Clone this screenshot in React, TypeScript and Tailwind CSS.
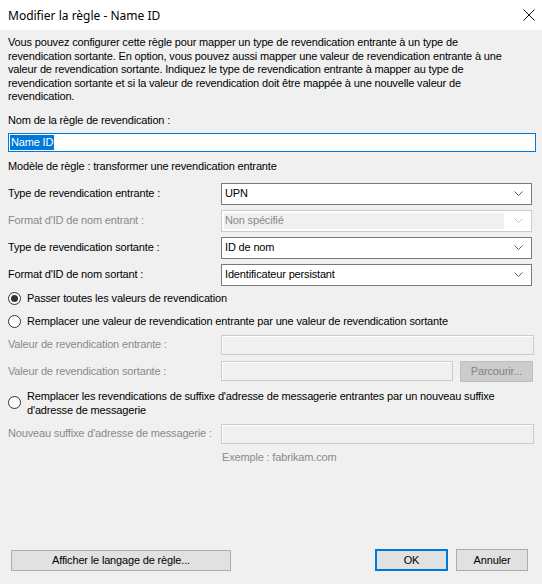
import React from 'react';

const font = { fontFamily: '"Liberation Sans", Arial, sans-serif' };

const Chevron: React.FC<{ disabled?: boolean }> = ({ disabled }) => (
  <svg width="9" height="5" viewBox="0 0 9 5" className="shrink-0">
    <path d="M0.5 0.5 L4.5 4.5 L8.5 0.5" fill="none" stroke={disabled ? '#c4c4c4' : '#606060'} strokeWidth="1" />
  </svg>
);

const Combo: React.FC<{ value: string; disabled?: boolean }> = ({ value, disabled }) =>
  disabled ? (
    <div className="w-[311px] h-[22px] border border-[#cccccc] bg-white flex items-center p-[2px] pr-[8px]">
      <div className="flex-1 h-full bg-[#f0f0f0] text-[#8a8a8a] flex items-center pl-[1px]">{value}</div>
      <div className="w-[19px] flex justify-end">
        <Chevron disabled />
      </div>
    </div>
  ) : (
    <div className="w-[311px] h-[22px] border border-[#7a7a7a] bg-white flex items-center pl-[3px] pr-[8px] text-black">
      <span className="flex-1">{value}</span>
      <Chevron />
    </div>
  );

const Row: React.FC<{ label: string; disabled?: boolean; children: React.ReactNode }> = ({ label, disabled, children }) => (
  <div className="flex items-center">
    <span className={`w-[213px] ${disabled ? 'text-[#8a8a8a]' : 'text-black'}`}>{label}</span>
    {children}
  </div>
);

const DisabledBox: React.FC<{ w: string }> = ({ w }) => (
  <div className={`${w} h-[20px] border border-[#cccccc] bg-[#f0f0f0] shadow-[inset_1px_1px_0_#ffffff]`} />
);

const Radio: React.FC<{ checked?: boolean }> = ({ checked }) => (
  <span className="w-[13px] h-[13px] rounded-full border border-[#333333] bg-white flex items-center justify-center shrink-0">
    {checked && <span className="w-[7px] h-[7px] rounded-full bg-[#333333]" />}
  </span>
);

const App: React.FC = () => {
  return (
    <div
      className="w-[542px] h-[584px] bg-[#f0f0f0] flex flex-col text-[11px] leading-[13px] tracking-[-0.16px] text-black"
      style={font}
    >
      {/* Title bar */}
      <div className="h-[30px] bg-white flex items-center justify-between pl-[8px] pr-[7px] shrink-0 tracking-normal">
        <span className="text-[12px] text-black" style={{ fontFamily: '"Noto Sans", "Open Sans", sans-serif' }}>
          Modifier la règle - Name ID
        </span>
        <svg width="12" height="12" viewBox="0 0 12 12">
          <path d="M0.5 0.5 L11.5 11.5 M11.5 0.5 L0.5 11.5" stroke="#111111" strokeWidth="1" />
        </svg>
      </div>

      <div className="flex-1 flex flex-col px-[8px]">
        <p className="mt-[6px] leading-[13.5px] whitespace-nowrap">
          Vous pouvez configurer cette règle pour mapper un type de revendication entrante à un type de
          <br />
          revendication sortante. En option, vous pouvez aussi mapper une valeur de revendication entrante à une
          <br />
          valeur de revendication sortante. Indiquez le type de revendication entrante à mapper au type de
          <br />
          revendication sortante et si la valeur de revendication doit être mappée à une nouvelle valeur de
          <br />
          revendication.
        </p>

        <div className="mt-[10px]">Nom de la règle de revendication :</div>
        <div className="mt-[6px] w-[528px] h-[19px] border border-[#0078d7] bg-white flex items-center pl-[1px]">
          <span className="bg-[#0078d7] text-white px-[1px] leading-[15px]">Name ID</span>
        </div>
        <div className="mt-[8px]">Modèle de règle : transformer une revendication entrante</div>

        <div className="mt-[10px] flex flex-col gap-[5px]">
          <Row label="Type de revendication entrante :">
            <Combo value="UPN" />
          </Row>
          <Row label="Format d'ID de nom entrant :" disabled>
            <Combo value="Non spécifié" disabled />
          </Row>
          <Row label="Type de revendication sortante :">
            <Combo value="ID de nom" />
          </Row>
          <Row label="Format d'ID de nom sortant :">
            <Combo value="Identificateur persistant" />
          </Row>
        </div>

        <div className="mt-[4px] h-[17px] flex items-center gap-[6px]">
          <Radio checked />
          <span>Passer toutes les valeurs de revendication</span>
        </div>
        <div className="mt-[6px] h-[17px] flex items-center gap-[6px]">
          <Radio />
          <span>Remplacer une valeur de revendication entrante par une valeur de revendication sortante</span>
        </div>

        <div className="mt-[5px] flex flex-col gap-[6px] text-[#8a8a8a]">
          <div className="flex items-center">
            <span className="w-[213px]">Valeur de revendication entrante :</span>
            <DisabledBox w="w-[313px]" />
          </div>
          <div className="flex items-center">
            <span className="w-[213px]">Valeur de revendication sortante :</span>
            <DisabledBox w="w-[232px]" />
            <div className="ml-[7px] w-[73px] h-[21px] bg-[#cccccc] border border-[#bfbfbf] flex items-center justify-center text-[#838383]">
              Parcourir...
            </div>
          </div>
        </div>

        <div className="mt-[7px] flex items-center gap-[6px]">
          <Radio />
          <span className="leading-[14px]">
            Remplacer les revendications de suffixe d'adresse de messagerie entrantes par un nouveau suffixe
            <br />
            d'adresse de messagerie
          </span>
        </div>

        <div className="mt-[7px] flex items-center text-[#8a8a8a]">
          <span className="w-[213px]">Nouveau suffixe d'adresse de messagerie :</span>
          <DisabledBox w="w-[313px]" />
        </div>
        <div className="mt-[7px] pl-[214px] text-[#8a8a8a]">Exemple : fabrikam.com</div>

        <div className="mt-auto mb-[13px] flex items-center">
          <button className="ml-[3px] w-[220px] h-[21px] bg-[#e1e1e1] border border-[#adadad] text-black">
            Afficher le langage de règle...
          </button>
          <button className="ml-auto w-[73px] h-[22px] bg-[#e1e1e1] border-2 border-[#0078d7] text-black">OK</button>
          <button className="ml-[8px] mr-[6px] w-[72px] h-[22px] bg-[#e1e1e1] border border-[#adadad] text-black">
            Annuler
          </button>
        </div>
      </div>
    </div>
  );
};

export default App;
